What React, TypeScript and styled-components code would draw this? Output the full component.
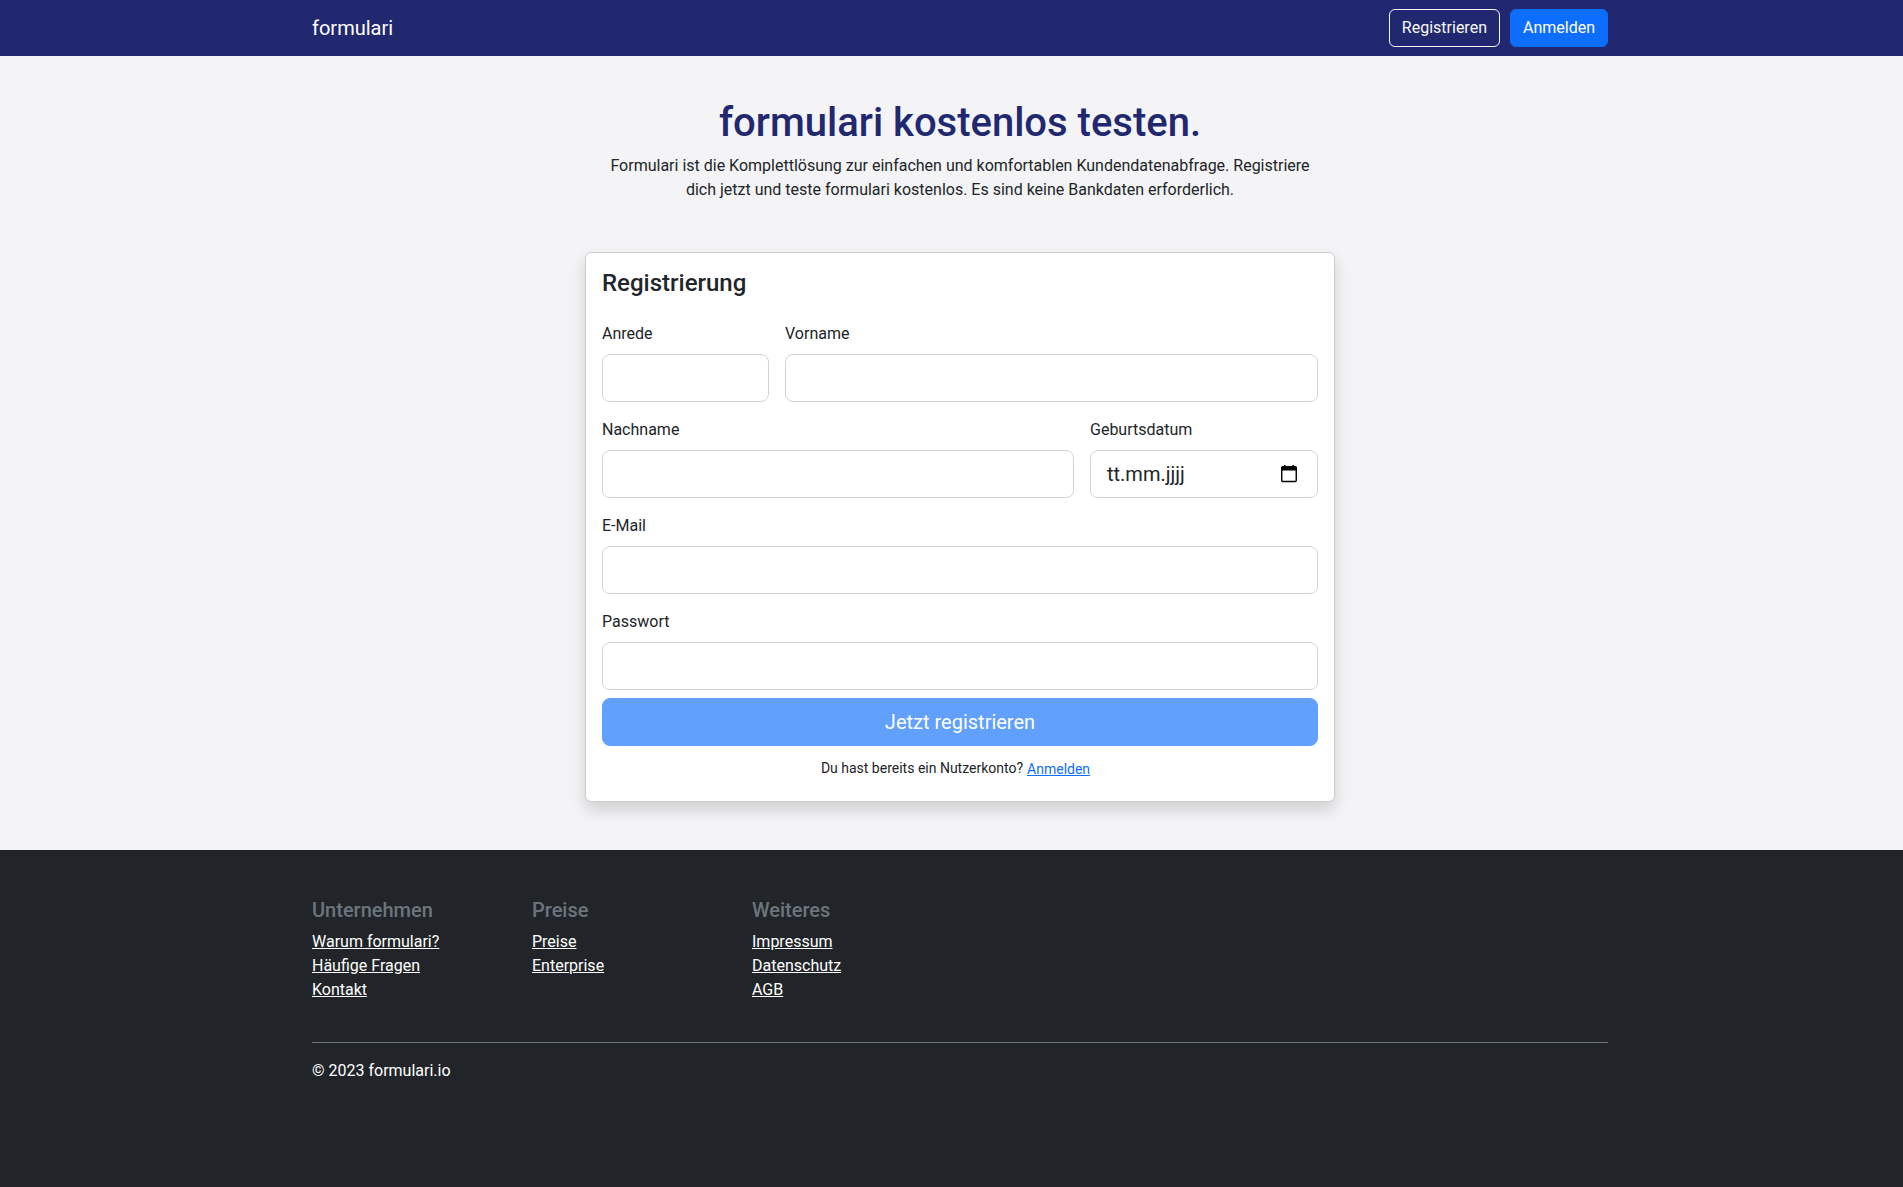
import React from "react";
import styled, { createGlobalStyle } from "styled-components";

const GlobalStyle = createGlobalStyle`
  *, *::before, *::after { box-sizing: border-box; }
  html { overflow: hidden; }
  body {
    margin: 0;
    background: #212529;
    color: #212529;
    font: 400 16px/24px Roboto, "Liberation Sans", sans-serif;
  }
`;

const Page = styled.div`
  display: flex;
  flex-direction: column;
  width: 1920px;
  min-height: 1187px;
`;

const Container = styled.div`
  width: 1296px;
  margin: 0 auto;
`;

const Header = styled.header`
  background: #212870;
`;

const NavRow = styled(Container)`
  display: flex;
  align-items: center;
  justify-content: space-between;
  height: 56px;
`;

const Brand = styled.a`
  color: #fff;
  font-size: 20px;
  font-weight: 400;
  line-height: 30px;
`;

const NavActions = styled.div`
  display: flex;
  gap: 10px;
`;

const NavButton = styled.button<{ $primary?: boolean }>`
  height: 38px;
  padding: 6px 12px;
  border: 1px solid ${(p) => (p.$primary ? "#0d6efd" : "#f8f9fa")};
  border-radius: 6px;
  background: ${(p) => (p.$primary ? "#0d6efd" : "transparent")};
  color: ${(p) => (p.$primary ? "#fff" : "#f8f9fa")};
  font: 400 16px/24px Roboto, "Liberation Sans", sans-serif;
`;

const Main = styled.main`
  height: 794px;
  padding-top: 43px;
  background: #f4f4f6;
`;

const Intro = styled.section`
  width: 726px;
  margin: 0 auto 50px;
  text-align: center;
`;

const Headline = styled.h1`
  margin: 0 0 7px;
  color: #212870;
  font-size: 40px;
  font-weight: 500;
  line-height: 48px;
`;

const Lead = styled.p`
  margin: 0;
`;

const Card = styled.form`
  width: 750px;
  height: 550px;
  margin: 0 auto;
  padding: 16px;
  border: 1px solid #cdcdcf;
  border-radius: 6px;
  background: #fff;
  box-shadow: 0 8px 16px rgba(0, 0, 0, 0.15);
`;

const CardTitle = styled.h2`
  margin: 0 0 24px;
  font-size: 24px;
  font-weight: 500;
  line-height: 29px;
`;

const FieldRow = styled.div<{ $columns: string }>`
  display: grid;
  grid-template-columns: ${(p) => p.$columns};
  gap: 16px;
  margin-bottom: 16px;

  &:last-of-type { margin-bottom: 8px; }
`;

const Field = styled.label`
  display: flex;
  flex-direction: column;
  gap: 8px;
`;

const Box = styled.span`
  display: flex;
  align-items: center;
  justify-content: space-between;
  height: 48px;
  padding: 0 20px 0 16px;
  border: 1px solid #ced4da;
  border-radius: 8px;
  background: #fff;
  font-size: 20px;
  line-height: 30px;
`;

const Submit = styled.button`
  display: block;
  width: 100%;
  height: 48px;
  border: 1px solid #0d6efd;
  border-radius: 8px;
  background: #0d6efd;
  color: #fff;
  font: 400 20px/30px Roboto, "Liberation Sans", sans-serif;
  opacity: 0.65;
`;

const AccountHint = styled.p`
  display: flex;
  justify-content: center;
  gap: 4px;
  margin: 12px 0 0;
  padding-right: 9px;
  font-size: 14px;
  line-height: 21px;
`;

const HintLink = styled.a`
  padding-top: 1px;
  color: #0d6efd;
  text-decoration: underline;
`;

const Footer = styled.footer`
  flex: 1;
  padding-top: 48px;
  background: #212529;
  color: #fff;
`;

const FooterColumns = styled.div`
  display: grid;
  grid-template-columns: repeat(3, 220px);
  height: 144px;
`;

const FooterColumn = styled.nav`
  display: flex;
  flex-direction: column;
  align-items: flex-start;
`;

const FooterTitle = styled.h5`
  margin: 0 0 8px;
  color: #6c757d;
  font-size: 20px;
  font-weight: 500;
  line-height: 24px;
`;

const FooterLink = styled.a`
  color: #fff;
  text-decoration: underline;
`;

const Copyright = styled.p`
  margin: 0;
  padding-top: 16px;
  border-top: 1px solid #6c757d;
`;

const CalendarIcon = () => (
  <svg width="16" height="18" viewBox="0 0 16 18" fill="none">
    <path d="M3.800 0v3M12.200 0v3" stroke="#000" strokeWidth="1.600" />
    <path d="M1.500 1.300h13A1.500 1.500 0 0 1 16 2.800V5.400H0V2.800A1.500 1.500 0 0 1 1.500 1.300Z" fill="#000" />
    <rect x="0.750" y="2.050" width="14.500" height="14.500" rx="1" stroke="#000" strokeWidth="1.400" />
  </svg>
);

const columns = [
  { title: "Unternehmen", links: ["Warum formulari?", "Häufige Fragen", "Kontakt"] },
  { title: "Preise", links: ["Preise", "Enterprise"] },
  { title: "Weiteres", links: ["Impressum", "Datenschutz", "AGB"] },
];

export default function App() {
  return (
    <Page>
      <GlobalStyle />
      <Header>
        <NavRow>
          <Brand>formulari</Brand>
          <NavActions>
            <NavButton>Registrieren</NavButton>
            <NavButton $primary>Anmelden</NavButton>
          </NavActions>
        </NavRow>
      </Header>
      <Main>
        <Intro>
          <Headline>formulari kostenlos testen.</Headline>
          <Lead>
            Formulari ist die Komplettlösung zur einfachen und komfortablen Kundendatenabfrage.
            Registriere dich jetzt und teste formulari kostenlos. Es sind keine Bankdaten
            erforderlich.
          </Lead>
        </Intro>
        <Card>
          <CardTitle>Registrierung</CardTitle>
          <FieldRow $columns="167px 1fr">
            <Field>Anrede<Box /></Field>
            <Field>Vorname<Box /></Field>
          </FieldRow>
          <FieldRow $columns="472px 1fr">
            <Field>Nachname<Box /></Field>
            <Field>
              Geburtsdatum
              <Box>
                tt.mm.jjjj
                <CalendarIcon />
              </Box>
            </Field>
          </FieldRow>
          <FieldRow $columns="1fr">
            <Field>E-Mail<Box /></Field>
          </FieldRow>
          <FieldRow $columns="1fr">
            <Field>Passwort<Box /></Field>
          </FieldRow>
          <Submit type="button">Jetzt registrieren</Submit>
          <AccountHint>
            Du hast bereits ein Nutzerkonto?
            <HintLink>Anmelden</HintLink>
          </AccountHint>
        </Card>
      </Main>
      <Footer>
        <Container>
          <FooterColumns>
            {columns.map((column) => (
              <FooterColumn key={column.title}>
                <FooterTitle>{column.title}</FooterTitle>
                {column.links.map((link) => (
                  <FooterLink key={link}>{link}</FooterLink>
                ))}
              </FooterColumn>
            ))}
          </FooterColumns>
          <Copyright>© 2023 formulari.io</Copyright>
        </Container>
      </Footer>
    </Page>
  );
}
